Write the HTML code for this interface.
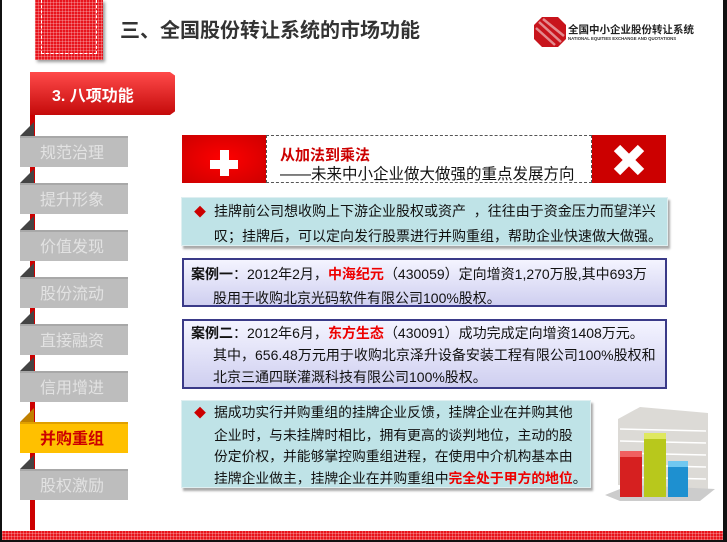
<!DOCTYPE html>
<html><head><meta charset="utf-8"><style>
*{margin:0;padding:0;box-sizing:border-box}
body{width:727px;height:542px;position:relative;overflow:hidden;background:#fff;font-family:"Liberation Sans","Noto Sans CJK SC",sans-serif}
.a{position:absolute}
.tex{background-color:#e8141c;background-image:repeating-linear-gradient(0deg,rgba(255,255,255,.25) 0 1px,transparent 1px 3px),repeating-linear-gradient(90deg,rgba(255,255,255,.25) 0 1px,transparent 1px 3px)}
.tab{position:absolute;left:20px;width:108px;height:31px;background:#bdbdbd;color:#e2e2e2;font-size:16px;line-height:31px;padding-left:20px;border-top:2px solid #a8a8a8}
.tri{position:absolute;left:20px;width:0;height:0;border-left:14px solid transparent;border-bottom:14px solid #444}
.box{position:absolute;font-size:14px;line-height:24px;color:#111;white-space:nowrap}
.cyan{background:#bfe3e7;box-shadow:2px 3px 2px #aaa;border:1px solid #dfeff1}
.lav{background:linear-gradient(#f4f4ff,#cfcff0);border:2px solid #3a3a88}
.dia{color:#c00;font-size:12px;margin-right:8px}
</style></head><body>
<div class="a" style="left:0;top:0;width:2px;height:542px;background:#111"></div>
<div class="a" style="left:723px;top:0;width:4px;height:542px;background:#111"></div>
<div class="a tex" style="left:35px;top:0;width:68px;height:60px;box-shadow:2px 2px 3px #999"></div>
<div class="a" style="left:41px;top:0;width:56px;height:54px;border:1px dashed #fff;border-top:none"></div>
<div class="a" style="left:120px;top:14px;font-size:20px;font-weight:bold;color:#333">三、全国股份转让系统的市场功能</div>
<svg class="a" style="left:533px;top:16px" width="34" height="32" viewBox="0 0 34 32"><polygon points="9,1 25,1 33,9 33,23 25,31 9,31 1,23 1,9" fill="#c8141c"/><path d="M6,6 L28,26 M10,3 L31,20 M3,12 L22,29" stroke="#fff" stroke-width="2.5" opacity=".5"/></svg>
<div class="a" style="left:568px;top:22px;font-size:10.5px;font-weight:bold;color:#222">全国中小企业股份转让系统</div>
<div class="a" style="left:568px;top:36px;font-size:4.3px;color:#333;font-weight:bold">NATIONAL EQUITIES EXCHANGE AND QUOTATIONS</div>
<div class="a" style="left:30px;top:115px;width:5px;height:415px;background:#c00"></div>
<svg class="a" style="left:30px;top:71px" width="145" height="46"><defs><linearGradient id="g" x1="0" y1="0" x2="0" y2="1"><stop offset="0" stop-color="#ff4a4a"/><stop offset="1" stop-color="#c40a0a"/></linearGradient></defs><polygon points="0,1 140,1 170,22 140,44 0,44" fill="url(#g)"/></svg>
<div class="a" style="left:52px;top:82px;color:#fff;font-size:16px;font-weight:bold">3. 八项功能</div>
<div class="tri" style="top:122px"></div><div class="tab" style="top:136px">规范治理</div>
<div class="tri" style="top:169px"></div><div class="tab" style="top:183px">提升形象</div>
<div class="tri" style="top:216px"></div><div class="tab" style="top:230px">价值发现</div>
<div class="tri" style="top:263px"></div><div class="tab" style="top:277px">股份流动</div>
<div class="tri" style="top:310px"></div><div class="tab" style="top:324px">直接融资</div>
<div class="tri" style="top:357px"></div><div class="tab" style="top:371px">信用增进</div>
<div class="tri" style="top:408px;border-bottom-color:#c08000"></div><div class="tab" style="top:422px;background:#ffc000;border-top-color:#e0a000;color:#c00;font-weight:bold">并购重组</div>
<div class="tri" style="top:455px"></div><div class="tab" style="top:469px">股权激励</div>
<div class="a" style="left:182px;top:135px;width:84px;height:48px;background:radial-gradient(#f00,#c00)"></div>
<div class="a" style="left:210px;top:160px;width:28px;height:9px;background:#fff"></div>
<div class="a" style="left:220px;top:150px;width:9px;height:26px;background:#fff"></div>
<div class="a" style="left:266px;top:135px;width:326px;height:48px;border:1px dashed #555"></div>
<div class="a" style="left:280px;top:144px;font-size:15px;font-weight:bold;color:#c00">从加法到乘法</div>
<div class="a" style="left:280px;top:162px;font-size:15.5px;color:#111">——未来中小企业做大做强的重点发展方向</div>
<div class="a" style="left:592px;top:135px;width:74px;height:48px;background:#c00"></div>
<svg class="a" style="left:611px;top:144px" width="36" height="32"><path d="M6,4 L30,28 M30,4 L6,28" stroke="#fff" stroke-width="9"/></svg>
<div class="box cyan" style="left:181px;top:197px;width:487px;height:49px;padding:1px 0 0 12px"><span class="dia">◆</span>挂牌前公司想收购上下游企业股权或资产 &nbsp;，往往由于资金压力而望洋兴<br><span style="padding-left:20px">叹；挂牌后，可以定向发行股票进行并购重组，帮助企业快速做大做强。</span></div>
<div class="box lav" style="left:182px;top:258px;width:485px;height:49px;padding:2px 0 0 7px"><b>案例一</b>：2012年2月，<b style="color:#e00">中海纪元</b>（430059）定向增资1,270万股,其中693万<br><span style="padding-left:22px">股用于收购北京光码软件有限公司100%股权。</span></div>
<div class="box lav" style="left:182px;top:319px;width:485px;height:70px;padding:1px 0 0 7px;line-height:22px"><b>案例二</b>：2012年6月，<b style="color:#e00">东方生态</b>（430091）成功完成定向增资1408万元。<br><span style="padding-left:22px">其中，656.48万元用于收购北京泽升设备安装工程有限公司100%股权和</span><br><span style="padding-left:22px">北京三通四联灌溉科技有限公司100%股权。</span></div>
<div class="box cyan" style="left:181px;top:400px;width:410px;height:88px;padding:1px 0 0 12px;line-height:21.5px;font-size:13.8px"><span class="dia">◆</span>据成功实行并购重组的挂牌企业反馈，挂牌企业在并购其他<br><span style="padding-left:20px">企业时，与未挂牌时相比，拥有更高的谈判地位，主动的股</span><br><span style="padding-left:20px">份定价权，并能够掌控购重组进程，在使用中介机构基本由</span><br><span style="padding-left:20px">挂牌企业做主，挂牌企业在并购重组中<b style="color:#e00">完全处于甲方的地位</b>。</span></div>
<svg class="a" style="left:600px;top:405px" width="115" height="100"><polygon points="18,14 40,2 108,8 108,85 18,80" fill="#dcdad6"/><g stroke="#fff" stroke-width="1.5"><path d="M20,24 L106,26 M20,36 L106,38 M20,48 L106,50 M20,60 L106,62 M20,72 L106,74"/></g><polygon points="5,90 30,80 115,84 100,96 20,96" fill="#ccc"/><rect x="20" y="50" width="22" height="42" fill="#d62020"/><rect x="20" y="46" width="22" height="6" fill="#f06060"/><rect x="44" y="32" width="22" height="60" fill="#b8c81c"/><rect x="44" y="28" width="22" height="6" fill="#dfe860"/><rect x="68" y="60" width="20" height="32" fill="#1e90d0"/><rect x="68" y="56" width="20" height="6" fill="#70c8f0"/></svg>
<div class="a tex" style="left:2px;top:531px;width:721px;height:9px"></div>
<div class="a" style="left:0;top:540px;width:727px;height:2px;background:#111"></div>
</body></html>
